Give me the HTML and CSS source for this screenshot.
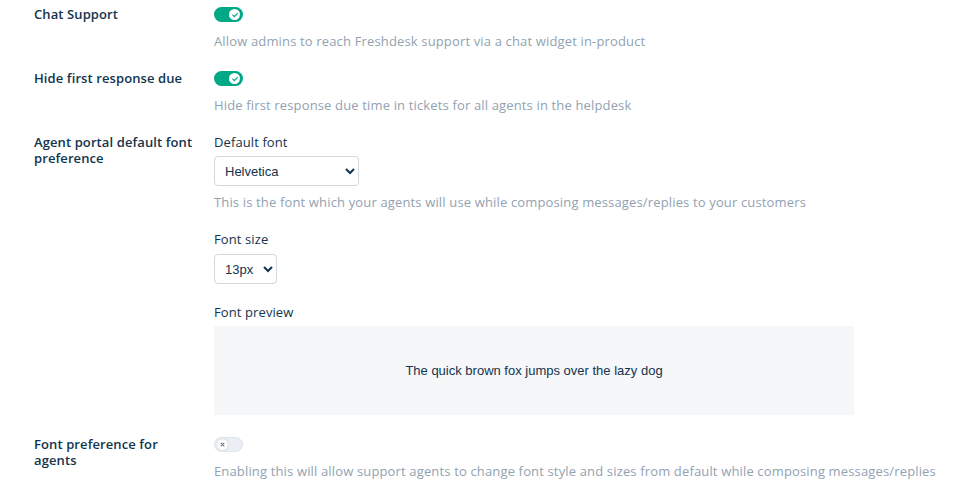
FILE: index.html
```html
<!DOCTYPE html>
<html>
<head>
<meta charset="utf-8">
<link rel="stylesheet" href="styles.css">
</head>
<body>
<div class="page">
  <div class="row">
    <div class="label">Chat Support</div>
    <div class="content">
      <span class="toggle on"><span class="knob"><svg viewBox="0 0 10 10" width="8" height="8"><path d="M2.3 5.2 L4.2 7 L7.7 3.2" fill="none" stroke="#00a886" stroke-width="1.6" stroke-linecap="round" stroke-linejoin="round"/></svg></span></span>
      <div class="desc">Allow admins to reach Freshdesk support via a chat widget in-product</div>
    </div>
  </div>
  <div class="row">
    <div class="label">Hide first response due</div>
    <div class="content">
      <span class="toggle on"><span class="knob"><svg viewBox="0 0 10 10" width="8" height="8"><path d="M2.3 5.2 L4.2 7 L7.7 3.2" fill="none" stroke="#00a886" stroke-width="1.6" stroke-linecap="round" stroke-linejoin="round"/></svg></span></span>
      <div class="desc">Hide first response due time in tickets for all agents in the helpdesk</div>
    </div>
  </div>
  <div class="row">
    <div class="label">Agent portal default font preference</div>
    <div class="content">
      <div class="field-label">Default font</div>
      <select class="select font-select">
        <option>Helvetica</option>
      </select>
      <div class="desc desc-select">This is the font which your agents will use while composing messages/replies to your customers</div>
      <div class="field-label field-gap">Font size</div>
      <select class="select size-select">
        <option>13px</option>
      </select>
      <div class="field-label field-gap2">Font preview</div>
      <div class="preview">The quick brown fox jumps over the lazy dog</div>
    </div>
  </div>
  <div class="row">
    <div class="label">Font preference for agents</div>
    <div class="content">
      <span class="toggle off"><span class="knob"><svg viewBox="0 0 10 10" width="7" height="7"><path d="M3 3 L7 7 M7 3 L3 7" fill="none" stroke="#6f7c87" stroke-width="1.8" stroke-linecap="round"/></svg></span></span>
      <div class="desc desc-last">Enabling this will allow support agents to change font style and sizes from default while composing messages/replies</div>
    </div>
  </div>
</div>
</body>
</html>
```
FILE: styles.css
```css
html, body {
  margin: 0;
  padding: 0;
  background: #ffffff;
}
body {
  font-family: "Open Sans", Lato, sans-serif;
  font-size: 13px;
  line-height: 16px;
  color: #12344d;
}
.page {
  padding: 6px 0 0 34px;
}
.row {
  display: grid;
  grid-template-columns: 166px 1fr;
  column-gap: 14px;
  margin-bottom: 21px;
}
.label {
  font-weight: 600;
  color: #12344d;
  letter-spacing: 0.1px;
}
.content {
  display: flex;
  flex-direction: column;
  align-items: flex-start;
}
.toggle {
  display: flex;
  align-items: center;
  width: 29px;
  height: 15px;
  border-radius: 8px;
  margin-top: 1px;
  box-sizing: border-box;
}
.toggle.on {
  background: #00a886;
  justify-content: flex-end;
  padding-right: 3px;
}
.toggle.off {
  background: #ebeff3;
  border: 1px solid #dfe4e9;
  justify-content: flex-start;
  padding-left: 2px;
}
.knob {
  width: 11px;
  height: 11px;
  border-radius: 50%;
  background: #ffffff;
  display: flex;
  align-items: center;
  justify-content: center;
}
.toggle.off .knob {
  box-shadow: 0 0 1px rgba(0,0,0,0.3);
}
.desc {
  color: #92a2b1;
  margin-top: 11px;
  letter-spacing: 0.15px;
}
.field-label {
  color: #12344d;
  letter-spacing: 0.1px;
}
.select {
  font-family: "Liberation Sans", Arial, sans-serif;
  font-size: 13px;
  color: #12344d;
  background: #ffffff;
  border: 1px solid #cfd7df;
  border-radius: 4px;
  height: 30px;
  margin-top: 6px;
  padding: 0 6px;
}
.font-select {
  width: 145px;
}
.size-select {
  width: 63px;
  height: 30px;
  margin-top: 7px;
}
.desc-select {
  margin-top: 8px;
}
.field-gap {
  margin-top: 21px;
}
.field-gap2 {
  margin-top: 20px;
}
.preview {
  margin-top: 6px;
  width: 640px;
  height: 89px;
  background: #f5f7f9;
  display: flex;
  align-items: center;
  justify-content: center;
  font-family: "Liberation Sans", Arial, sans-serif;
  font-size: 13px;
  color: #12344d;
}
.desc-last {
  margin-top: 11px;
}
```
